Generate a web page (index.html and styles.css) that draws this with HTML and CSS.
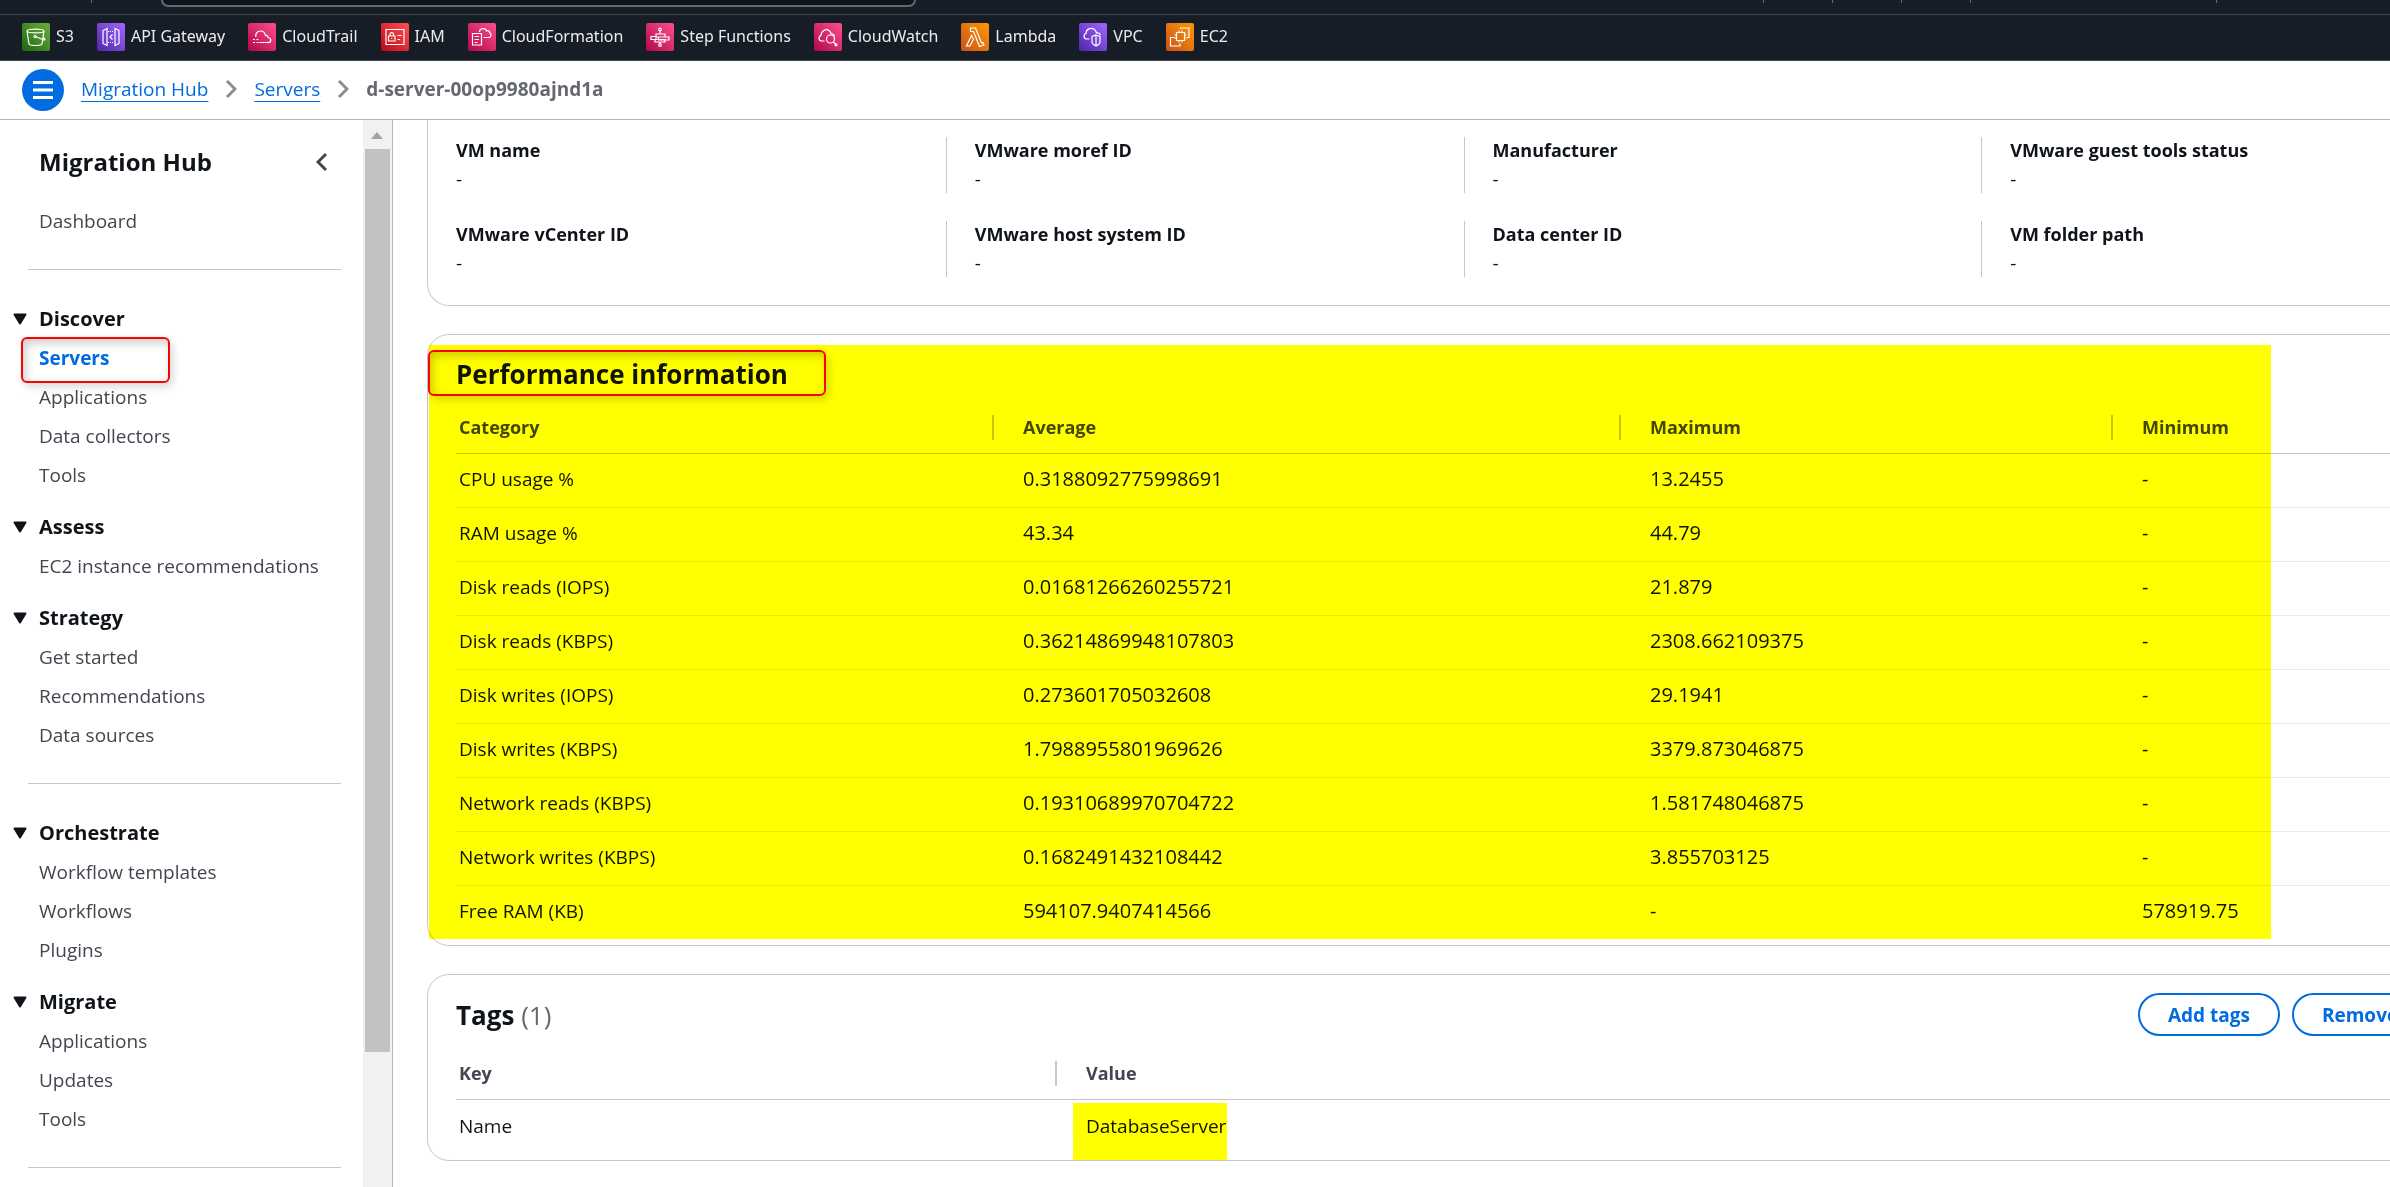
FILE: index.html
```html
<!DOCTYPE html>
<html lang="en">
<head>
<meta charset="utf-8">
<title>d-server-00op9980ajnd1a - Migration Hub</title>
<link rel="stylesheet" href="styles.css">
</head>
<body>
<div class="app">
  <header class="topbar">
    <div class="topbar-main" aria-hidden="true">
      <span class="tick tick-menu"></span>
      <span class="search-edge"></span>
      <span class="tick-group"><span class="tick"></span><span class="tick"></span><span class="tick"></span><span class="tick"></span></span>
      <span class="tick tick-account"></span>
    </div>
    <nav class="favorites" aria-label="Favorites">
      <a href="#s3"><svg class="svc green" viewBox="0 0 28 28"><path d="M5 8c0-2.500 17-2.500 17 0l-2 13c-1 2-12 2-13 0zM5 8c0 2.500 17 2.500 17 0M13.500 13.500l7 3c3.500 1.500 3.500-.5 0-2.500"/><circle cx="13" cy="13.500" r="1"/></svg>S3</a>
      <a href="#apigateway"><svg class="svc purple" viewBox="0 0 28 28"><path d="M10 5.500l-4 2v13l4 2zM18 5.500l4 2v13l-4 2z"/><path stroke-dasharray="1 1" d="M11 8.500h6M11 19.500h6"/><path d="M15.500 11.500L13 14l2.500 2.500"/></svg>API Gateway</a>
      <a href="#cloudtrail"><svg class="svc pink" viewBox="0 0 28 28"><path d="M8 14c-1-3 1-6 4.500-6 3 0 4.500 2 5 4.500 1.500-.5 2.500.5 2.500 2 4 1 3.500 5 0 5h-8.500"/><path stroke-dasharray="2 1.500" d="M5 16.500h7M5 19.500h6"/></svg>CloudTrail</a>
      <a href="#iam"><svg class="svc red" viewBox="0 0 28 28"><path d="M5 6.500h18v15H5zM7.500 13h6.500v5H7.500zM9 13v-1.500c0-2.500 3.500-2.500 3.500 0V13M10.750 15v1M16.500 12.500h4M16.500 16.500h2.500"/></svg>IAM</a>
      <a href="#cloudformation"><svg class="svc pink" viewBox="0 0 28 28"><path d="M4.500 10.500h9V22h-9zM6.500 13.500h4.500M6.500 16.500h4.500M6.500 19.500h3M11.500 9c0-4 6-4.500 7-1 2-1 3 .5 3 1.500 2.500 1.500 1.500 5-.5 5h-5.500"/></svg>CloudFormation</a>
      <a href="#stepfunctions"><svg class="svc pink" viewBox="0 0 28 28"><path d="M14 8v3M10 11h9v3h-9zM5 13.500h5v3H5zM12.500 14H23v3H12.500zM9 16.500h10v2.500H9zM14 19v2"/><circle cx="14" cy="6.500" r="1.300"/><circle cx="14" cy="22" r="1.300"/></svg>Step Functions</a>
      <a href="#cloudwatch"><svg class="svc pink" viewBox="0 0 28 28"><path d="M10.500 18H8c-3.500 0-4-4.500-1-5.500C7 8 12 5 15.500 8c1 .7 1.500 2 1.500 3 2-.5 3.500 1 3.500 2.500M19.500 19l3 3"/><circle cx="16.500" cy="16" r="4"/><circle cx="22" cy="21.800" r="1"/></svg>CloudWatch</a>
      <a href="#lambda"><svg class="svc orange" viewBox="0 0 28 28"><path d="M9.500 5h5l6 15 1.500-.5 1 2.500-4.500 1.500L12.500 8.500h-3zM10.500 12.500l2 3.500-3.500 7H5.500z"/></svg>Lambda</a>
      <a href="#vpc"><svg class="svc purple" viewBox="0 0 28 28"><path d="M10.500 16H8c-3.500 0-4-4.500-1-5.500C7 6 12 4 15.500 6.500 17 7.500 17 9 17.500 10c2-.5 3.500 0 4 2M17 12l4 1.500V19c0 1.500-2 3-4 4-2-1-4-2.500-4-4v-5.500zM17 12v11"/></svg>VPC</a>
      <a href="#ec2"><svg class="svc orange" viewBox="0 0 28 28"><path d="M10.500 9.500h8v8h-8zM13 9.500v-2M16 9.500v-2M13 19.500v-2M16 19.500v-2M10.500 12h-2M10.500 15h-2M18.500 12h2M18.500 15h2M14.500 6V5H23v9.500h-2M8.500 14.500h-4v8.500H14v-2.500"/></svg>EC2</a>
    </nav>
  </header>

  <div class="crumb-bar">
    <button class="menu-button" aria-label="Toggle navigation"><svg viewBox="0 0 42 42"><path d="M11 13.500h20M11 21h20M11 28.500h20"/></svg></button>
    <nav class="crumbs" aria-label="Breadcrumbs">
      <a href="#hub">Migration Hub</a>
      <svg class="sep" viewBox="0 0 12 20"><path d="M2 2l8 8-8 8"/></svg>
      <a href="#servers">Servers</a>
      <svg class="sep" viewBox="0 0 12 20"><path d="M2 2l8 8-8 8"/></svg>
      <span class="current">d-server-00op9980ajnd1a</span>
    </nav>
  </div>

  <div class="body">
    <aside class="sidebar">
      <nav class="side-nav" aria-label="Migration Hub">
        <div class="side-title">
          <h2>Migration Hub</h2>
          <button class="collapse" aria-label="Close navigation"><svg viewBox="0 0 12 20"><path d="M10 2L2 10l8 8"/></svg></button>
        </div>
        <ul class="links"><li><a href="#dashboard">Dashboard</a></li></ul>
        <hr>
        <section>
          <button class="group" aria-expanded="true"><svg viewBox="0 0 14 12"><path d="M1.500 1.500h11L7 10.500z"/></svg>Discover</button>
          <ul class="links">
            <li class="active"><a href="#servers">Servers</a><span class="mark mark-link"></span></li>
            <li><a href="#applications">Applications</a></li>
            <li><a href="#collectors">Data collectors</a></li>
            <li><a href="#tools">Tools</a></li>
          </ul>
        </section>
        <section>
          <button class="group" aria-expanded="true"><svg viewBox="0 0 14 12"><path d="M1.500 1.500h11L7 10.500z"/></svg>Assess</button>
          <ul class="links"><li><a href="#ec2rec">EC2 instance recommendations</a></li></ul>
        </section>
        <section>
          <button class="group" aria-expanded="true"><svg viewBox="0 0 14 12"><path d="M1.500 1.500h11L7 10.500z"/></svg>Strategy</button>
          <ul class="links">
            <li><a href="#start">Get started</a></li>
            <li><a href="#recommendations">Recommendations</a></li>
            <li><a href="#sources">Data sources</a></li>
          </ul>
        </section>
        <hr>
        <section>
          <button class="group" aria-expanded="true"><svg viewBox="0 0 14 12"><path d="M1.500 1.500h11L7 10.500z"/></svg>Orchestrate</button>
          <ul class="links">
            <li><a href="#templates">Workflow templates</a></li>
            <li><a href="#workflows">Workflows</a></li>
            <li><a href="#plugins">Plugins</a></li>
          </ul>
        </section>
        <section>
          <button class="group" aria-expanded="true"><svg viewBox="0 0 14 12"><path d="M1.500 1.500h11L7 10.500z"/></svg>Migrate</button>
          <ul class="links">
            <li><a href="#mapplications">Applications</a></li>
            <li><a href="#updates">Updates</a></li>
            <li><a href="#mtools">Tools</a></li>
          </ul>
        </section>
        <hr>
      </nav>
      <div class="scrollbar" aria-hidden="true">
        <svg class="scroll-up" viewBox="0 0 28 29"><path d="M8 19l6-7 6 7z"/></svg>
        <div class="scroll-track"><div class="thumb"></div></div>
      </div>
    </aside>

    <main class="content">
      <section class="card card-details">
        <dl class="fields">
          <div><dt>VM name</dt><dd>-</dd></div>
          <div><dt>VMware moref ID</dt><dd>-</dd></div>
          <div><dt>Manufacturer</dt><dd>-</dd></div>
          <div><dt>VMware guest tools status</dt><dd>-</dd></div>
          <div><dt>VMware vCenter ID</dt><dd>-</dd></div>
          <div><dt>VMware host system ID</dt><dd>-</dd></div>
          <div><dt>Data center ID</dt><dd>-</dd></div>
          <div><dt>VM folder path</dt><dd>-</dd></div>
        </dl>
      </section>

      <section class="card card-performance">
        <h2>Performance information</h2>
        <table>
          <colgroup><col class="c-category"><col class="c-average"><col class="c-maximum"><col></colgroup>
          <thead><tr><th scope="col">Category</th><th scope="col">Average</th><th scope="col">Maximum</th><th scope="col">Minimum</th></tr></thead>
          <tbody class="metrics">
            <tr><td>CPU usage %</td><td>0.3188092775998691</td><td>13.2455</td><td>-</td></tr>
            <tr><td>RAM usage %</td><td>43.34</td><td>44.79</td><td>-</td></tr>
            <tr><td>Disk reads (IOPS)</td><td>0.01681266260255721</td><td>21.879</td><td>-</td></tr>
            <tr><td>Disk reads (KBPS)</td><td>0.36214869948107803</td><td>2308.662109375</td><td>-</td></tr>
            <tr><td>Disk writes (IOPS)</td><td>0.273601705032608</td><td>29.1941</td><td>-</td></tr>
            <tr><td>Disk writes (KBPS)</td><td>1.7988955801969626</td><td>3379.873046875</td><td>-</td></tr>
            <tr><td>Network reads (KBPS)</td><td>0.19310689970704722</td><td>1.581748046875</td><td>-</td></tr>
            <tr><td>Network writes (KBPS)</td><td>0.1682491432108442</td><td>3.855703125</td><td>-</td></tr>
            <tr><td>Free RAM (KB)</td><td>594107.9407414566</td><td>-</td><td>578919.75</td></tr>
          </tbody>
        </table>
        <span class="highlight highlight-table"></span>
        <span class="mark mark-title"></span>
      </section>

      <section class="card card-tags">
        <div class="card-head">
          <h2>Tags <span class="count">(1)</span></h2>
          <div class="actions"><button>Add tags</button><button>Remove tags</button></div>
        </div>
        <table>
          <colgroup><col class="c-key"><col></colgroup>
          <thead><tr><th scope="col">Key</th><th scope="col">Value</th></tr></thead>
          <tbody><tr><td>Name</td><td class="tag-value">DatabaseServer<span class="highlight highlight-value"></span></td></tr></tbody>
        </table>
      </section>
    </main>
  </div>
</div>
</body>
</html>
```
FILE: styles.css
```css
* { box-sizing: border-box; }

body {
  margin: 0;
  font-family: "Open Sans", "Noto Sans", sans-serif;
  font-size: 19px;
  line-height: 28px;
  color: #0f141a;
  background: #fff;
}

h2, dl, dd, ul { margin: 0; padding: 0; }
ul { list-style: none; }
a { color: inherit; text-decoration: none; }
button { margin: 0; padding: 0; border: 0; background: none; font: inherit; color: inherit; cursor: pointer; }
svg { display: block; fill: none; stroke: currentColor; }

.app { display: flex; flex-direction: column; height: 100vh; overflow: hidden; }

/* Top bar */
.topbar { flex: none; background: #161d26; color: #ebebf0; }
.topbar-main { display: flex; align-items: flex-start; height: 15px; border-bottom: 1px solid #424650; }
.tick { width: 1px; height: 3px; background: #656871; }
.tick-menu { margin-left: 91px; }
.search-edge { flex: 0 1 755px; height: 7px; margin-left: 69px; border: 2px solid #656871; border-top: 0; border-radius: 0 0 8px 8px; background: #0f141a; }
.tick-group { display: flex; gap: 68px; margin-left: auto; }
.tick-account { margin: 0 173px 0 245px; }

.favorites { display: flex; gap: 23px; height: 46px; padding: 8px 22px 0; border-bottom: 1px solid #424650; font-family: "Noto Sans", "Open Sans", sans-serif; font-size: 16px; line-height: 26px; }
.favorites a { display: flex; gap: 6px; height: 28px; white-space: nowrap; }
.svc { width: 28px; height: 28px; border-radius: 2px; color: #fff; stroke-width: 1.2; }
.green { background: linear-gradient(45deg, #1b660f, #6cae3e); }
.purple { background: linear-gradient(45deg, #4d27a8, #a166ff); }
.pink { background: linear-gradient(45deg, #b0084d, #ff4f8b); }
.red { background: linear-gradient(45deg, #bd0816, #ff5252); }
.orange { background: linear-gradient(45deg, #c8511b, #f90); }

/* Breadcrumbs */
.crumb-bar { flex: none; display: flex; align-items: center; gap: 17px; height: 59px; padding: 0 22px; border-bottom: 1px solid #b4b4bb; }
.menu-button { width: 42px; height: 42px; border-radius: 50%; background: #006ce0; color: #fff; }
.menu-button svg { stroke-width: 3; }
.crumbs { display: flex; align-items: center; gap: 17px; padding-bottom: 2px; }
.crumbs a { color: #006ce0; text-decoration: underline; text-decoration-thickness: 1px; text-underline-offset: 5px; }
.sep { width: 12px; height: 20px; color: #8c8c94; stroke-width: 3; }
.current { font-weight: 700; color: #656871; }

/* Side navigation */
.body { flex: 1; display: flex; min-height: 0; }
.sidebar { flex: none; display: flex; width: 393px; border-right: 1px solid #b4b4bb; overflow: hidden; }
.side-nav { flex: 1; padding: 27px 22px 0 13px; color: #424650; }
.side-title { display: flex; justify-content: space-between; align-items: center; padding: 0 13px 0 26px; }
.side-title h2 { font-size: 24px; line-height: 30px; color: #0f141a; }
.collapse svg { width: 12px; height: 20px; stroke-width: 3; }
.side-title + .links { margin-top: 30px; }
.links { display: flex; flex-direction: column; gap: 11px; padding-left: 26px; }
.side-nav hr { height: 1px; margin: 34px 0 35px 15px; border: 0; background: #c6c6cd; }
.side-nav section + section { margin-top: 24px; }
.group { display: flex; align-items: center; gap: 12px; margin-bottom: 11px; font-size: 20px; font-weight: 700; color: #0f141a; }
.group svg { width: 14px; height: 12px; fill: currentColor; stroke-width: 2; stroke-linejoin: round; }
.active { position: relative; font-weight: 700; color: #006ce0; }

.scrollbar { flex: none; display: flex; flex-direction: column; width: 29px; background: #f1f1f1; }
.scroll-up { width: 28px; height: 29px; fill: #a3a3a3; stroke: none; }
.scroll-track { flex: 1; padding: 0 2px; }
.thumb { height: 87%; background: #c1c1c1; }

/* Content */
.content { flex: 1; min-width: 0; padding-left: 34px; overflow: hidden; }
.card { position: relative; margin: 0 -110px 28px 0; border: 1px solid #c6c6cd; border-radius: 22px; }
.card h2 { font-size: 26px; line-height: 34px; }

.card-details { padding: 17px 0 28px; border-top: 0; border-radius: 0 0 22px 22px; }
.fields { display: grid; grid-template-columns: repeat(4, 1fr); row-gap: 28px; }
.fields div { padding: 0 28px; }
.fields div:not(:nth-child(4n + 1)) { border-left: 1px solid #c6c6cd; }
.fields dt { padding-bottom: 2px; font-size: 18px; line-height: 26px; font-weight: 700; }

.card-performance { padding: 22px 28px 5px; }
.card-performance table { margin-top: 10px; }
.card-tags { padding: 18px 26px 6px 28px; }
.card-tags table { margin-top: 11px; }

table { width: 100%; border-collapse: separate; border-spacing: 0; table-layout: fixed; }
th { position: relative; padding: 12px 0 12px 29px; border-bottom: 1px solid #c6c6cd; text-align: left; font-size: 18px; color: #424650; }
td { padding: 12px 0 13px 29px; border-bottom: 1px solid #ebebf0; }
th:first-child, td:first-child { padding-left: 3px; }
.metrics td { padding-top: 11px; padding-bottom: 14px; }
.metrics td:not(:first-child) { font-size: 20px; }
tbody tr:last-child td { border-bottom-color: transparent; }
th:not(:last-child)::after { content: ""; position: absolute; right: 0; top: 14px; width: 2px; height: 25px; background: #c6c6cd; }
.c-category { width: 538px; }
.c-average { width: 627px; }
.c-maximum { width: 492px; }
.c-key { width: 601px; }

.card-head { display: flex; justify-content: space-between; align-items: center; }
.count { font-weight: 400; color: #656871; }
.actions { display: flex; gap: 12px; }
.actions button { height: 43px; padding: 0 28px; border: 2px solid #006ce0; border-radius: 22px; font-weight: 700; color: #006ce0; }

/* Annotations laid over the page */
.highlight { position: absolute; background: #ff0; mix-blend-mode: multiply; pointer-events: none; }
.highlight-table { top: 10px; right: 228px; bottom: 6px; left: 1px; }
.tag-value { position: relative; }
.highlight-value { top: 3px; bottom: -7px; left: 16px; width: 154px; }
.mark { position: absolute; border: 2px solid #f00; border-radius: 6px; box-shadow: 3px 4px 8px rgba(0, 0, 0, .15), inset 3px 4px 10px rgba(0, 0, 0, .2); pointer-events: none; }
.mark-link { top: -7px; left: -18px; width: 149px; height: 46px; }
.mark-title { top: 15px; left: 0; width: 398px; height: 46px; }
```
